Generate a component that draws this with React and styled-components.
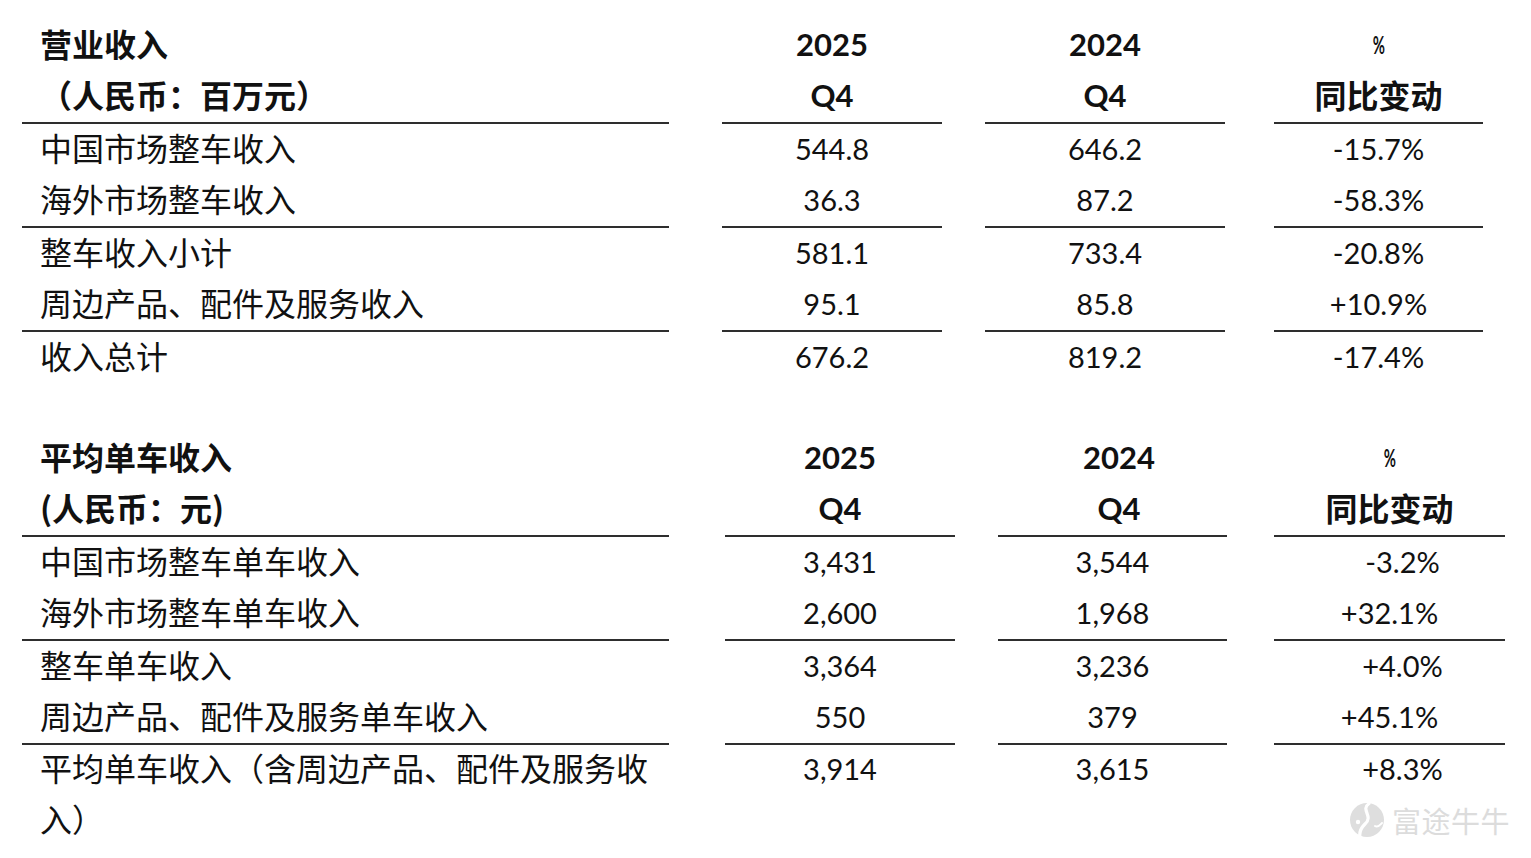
import React from "react";
import styled, { createGlobalStyle } from "styled-components";

const GlobalStyle = createGlobalStyle`
  html, body { margin: 0; padding: 0; background: #ffffff; }
  body {
    font-family: Lato, "Noto Sans CJK SC", sans-serif;
    color: #111111;
  }
`;

const Page = styled.main`
  position: relative;
  width: 1531px;
  height: 858px;
  box-sizing: border-box;
  padding: 20px 0 0 22px;
  display: flex;
  flex-direction: column;
  gap: 49px;
  overflow: hidden;
`;

const Table = styled.section`
  --cols: ${(p) => p.$cols};
  display: flex;
  flex-direction: column;
`;

const Row = styled.div`
  display: grid;
  grid-template-columns: var(--cols);
`;

const Cell = styled.div`
  grid-column: ${(p) => p.$col};
  box-sizing: border-box;
  height: ${(p) => (p.$tall ? "auto" : "52px")};
  display: flex;
  align-items: ${(p) => (p.$tall ? "flex-start" : "center")};
  justify-content: center;
  padding-left: ${(p) => p.$shift || 0}px;
  padding-bottom: ${(p) => (p.$tall ? "0" : "4px")};
  margin-top: ${(p) => (p.$tall ? "-2px" : "0")};
  border-bottom: ${(p) => (p.$rule ? "2px solid #2e2e2e" : "0")};
  font-family: Lato, "Noto Sans CJK SC", sans-serif;
  font-size: ${(p) => (p.$head ? "31px" : "29px")};
  font-weight: ${(p) => (p.$head ? 700 : 400)};
  line-height: ${(p) => (p.$tall ? "51px" : "normal")};
  white-space: nowrap;
`;

const Label = styled(Cell)`
  justify-content: flex-start;
  padding-left: 18px;
  padding-bottom: ${(p) => (p.$tall ? "0" : "6px")};
  margin-top: ${(p) => (p.$tall ? "-3px" : "0")};
  font-family: "Noto Sans CJK SC", sans-serif;
  font-size: 32px;
  font-weight: ${(p) => (p.$head ? 700 : 400)};
  white-space: normal;
  word-break: break-all;
`;

const CnHead = styled.span`
  font-family: "Noto Sans CJK SC", sans-serif;
  font-size: 32px;
  font-weight: 700;
  position: relative;
  top: -1px;
`;

const Percent = styled.span`
  display: inline-block;
  font-family: Lato, sans-serif;
  font-size: 24px;
  font-weight: 700;
  transform: scaleX(0.62);
`;

const Watermark = styled.div`
  position: absolute;
  right: 21px;
  bottom: 17px;
  display: flex;
  align-items: center;
  gap: 7px;
  color: #dcdcdc;
  font-family: "Noto Sans CJK SC", sans-serif;
  font-size: 29px;
  letter-spacing: 0.5px;
`;

const LogoMark = () => (
  <svg width="36" height="36" viewBox="0 0 36 36" aria-hidden="true">
    <circle cx="18" cy="18" r="17" fill="#dedede" />
    <path
      d="M20 1.5 C 11 8, 25 14, 16 22 C 12 26, 10 30, 11 35"
      fill="none"
      stroke="#ffffff"
      strokeWidth="3.2"
      strokeLinecap="round"
    />
    <circle cx="9" cy="20" r="2.2" fill="#ffffff" />
    <path d="M26 24 C 29 26, 31 23, 33 21" fill="none" stroke="#ffffff" strokeWidth="2" strokeLinecap="round" />
  </svg>
);

const table1Cols = "647px 53px 220px 43px 240px 49px 209px";
const table2Cols = "647px 56px 230px 43px 229px 47px 231px";

const table1 = {
  cols: table1Cols,
  title: ["营业收入", "（人民币：百万元）"],
  head3Shift: 0,
  rows: [
    { label: "中国市场整车收入", v: ["544.8", "646.2", "-15.7%"] },
    { label: "海外市场整车收入", v: ["36.3", "87.2", "-58.3%"], rule: true },
    { label: "整车收入小计", v: ["581.1", "733.4", "-20.8%"] },
    { label: "周边产品、配件及服务收入", v: ["95.1", "85.8", "+10.9%"], rule: true },
    { label: "收入总计", v: ["676.2", "819.2", "-17.4%"] },
  ],
};

const table2 = {
  cols: table2Cols,
  title: ["平均单车收入", "(人民币：元)"],
  head3Shift: 13,
  rows: [
    { label: "中国市场整车单车收入", v: ["3,431", "3,544", "-3.2%"], pShift: 26 },
    { label: "海外市场整车单车收入", v: ["2,600", "1,968", "+32.1%"], rule: true },
    { label: "整车单车收入", v: ["3,364", "3,236", "+4.0%"], pShift: 26 },
    { label: "周边产品、配件及服务单车收入", v: ["550", "379", "+45.1%"], rule: true },
    {
      label: "平均单车收入（含周边产品、配件及服务收入）",
      v: ["3,914", "3,615", "+8.3%"],
      pShift: 26,
      tall: true,
    },
  ],
};

function DataTable({ data }) {
  return (
    <Table $cols={data.cols}>
      <Row>
        <Label $col={1} $head>{data.title[0]}</Label>
        <Cell $col={3} $head>2025</Cell>
        <Cell $col={5} $head $shift={data.head3Shift}>2024</Cell>
        <Cell $col={7} $head><Percent>%</Percent></Cell>
      </Row>
      <Row>
        <Label $col={1} $head $rule>{data.title[1]}</Label>
        <Cell $col={3} $head $rule>Q4</Cell>
        <Cell $col={5} $head $rule $shift={data.head3Shift}>Q4</Cell>
        <Cell $col={7} $head $rule><CnHead>同比变动</CnHead></Cell>
      </Row>
      {data.rows.map((r) => (
        <Row key={r.label}>
          <Label $col={1} $rule={r.rule} $tall={r.tall}>{r.label}</Label>
          <Cell $col={3} $rule={r.rule} $tall={r.tall}>{r.v[0]}</Cell>
          <Cell $col={5} $rule={r.rule} $tall={r.tall}>{r.v[1]}</Cell>
          <Cell $col={7} $rule={r.rule} $tall={r.tall} $shift={r.pShift}>{r.v[2]}</Cell>
        </Row>
      ))}
    </Table>
  );
}

export default function App() {
  return (
    <>
      <GlobalStyle />
      <Page>
        <DataTable data={table1} />
        <DataTable data={table2} />
        <Watermark>
          <LogoMark />
          <span>富途牛牛</span>
        </Watermark>
      </Page>
    </>
  );
}
